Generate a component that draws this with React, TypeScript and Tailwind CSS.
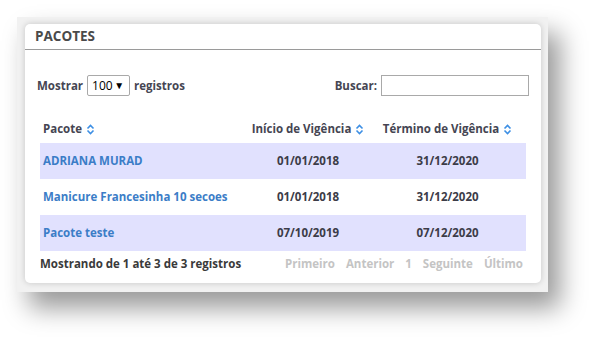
import React from "react"

const SortIcon = () => (
  <svg width="9" height="11" viewBox="0 0 9 11" className="inline-block ml-[4px] -mt-[2px]">
    <path d="M1.5 4.5 L4.5 1.5 L7.5 4.5" fill="none" stroke="#3d8fe4" strokeWidth="1.6" />
    <path d="M1.5 6.5 L4.5 9.5 L7.5 6.5" fill="none" stroke="#3d8fe4" strokeWidth="1.6" />
  </svg>
)

const rows = [
  { nome: "ADRIANA MURAD", inicio: "01/01/2018", fim: "31/12/2020" },
  { nome: "Manicure Francesinha 10 secoes", inicio: "01/01/2018", fim: "31/12/2020" },
  { nome: "Pacote teste", inicio: "07/10/2019", fim: "07/12/2020" },
]

export default function App() {
  return (
    <div
      className="w-[596px] h-[340px] bg-white pt-[17px] pl-[17px] overflow-hidden"
      style={{ fontFamily: '"Open Sans", sans-serif' }}
    >
      <div className="w-[531px] h-[275px] bg-[#f1f1f1] pt-[7px] pl-[8px] shadow-[12px_16px_24px_rgba(0,0,0,0.4)]">
        <div className="w-[516px] h-[259px] bg-white rounded-[5px] shadow-[0_0_6px_rgba(0,0,0,0.18)] flex flex-col">
          <div className="h-[26px] border-b border-[#9a9a9a] pl-[10px] flex items-center">
            <span className="text-[13.5px] font-bold text-[#4a4a4a]">PACOTES</span>
          </div>

          <div className="flex items-center justify-between pl-[12px] pr-[12px] mt-[25px] h-[21px] text-[11.5px] font-bold text-[#454552]">
            <div className="flex items-center">
              <span>Mostrar</span>
              <div className="ml-[4px] mr-[4px] w-[43px] h-[21px] border border-[#a9a9a9] rounded-[2px] flex items-center justify-between pl-[4px] pr-[5px] font-normal text-[12px] text-black">
                <span>100</span>
                <span className="text-[10px]">▼</span>
              </div>
              <span>registros</span>
            </div>
            <div className="flex items-center">
              <span>Buscar:</span>
              <div className="ml-[4px] w-[148px] h-[21px] border border-[#a9a9a9]" />
            </div>
          </div>

          <div className="mx-[15px] mt-[19px] text-[11.5px] font-bold">
            <div className="h-[28px] flex items-center text-[#454552]">
              <div className="w-[207px] pl-[3px]">
                Pacote
                <SortIcon />
              </div>
              <div className="w-[122px] text-center">
                Início de Vigência
                <SortIcon />
              </div>
              <div className="flex-1 text-center">
                Término de Vigência
                <SortIcon />
              </div>
            </div>
            {rows.map((r, i) => (
              <div
                key={r.nome}
                className={`h-[36px] flex items-center ${i % 2 === 0 ? "bg-[#e1e1fe]" : "bg-white"}`}
              >
                <div className="w-[207px] pl-[3px] text-[#3b7dc7]">{r.nome}</div>
                <div className="w-[122px] text-center text-[#3c3c48]">{r.inicio}</div>
                <div className="flex-1 text-center text-[#3c3c48]">{r.fim}</div>
              </div>
            ))}
            <div className="h-[26px] flex items-center justify-between">
              <span className="text-[#3a3a3a]">Mostrando de 1 até 3 de 3 registros</span>
              <div className="flex items-center gap-[11px] text-[#c4c4c4] pr-[3px]">
                <span>Primeiro</span>
                <span>Anterior</span>
                <span>1</span>
                <span>Seguinte</span>
                <span>Último</span>
              </div>
            </div>
          </div>
        </div>
      </div>
    </div>
  )
}
